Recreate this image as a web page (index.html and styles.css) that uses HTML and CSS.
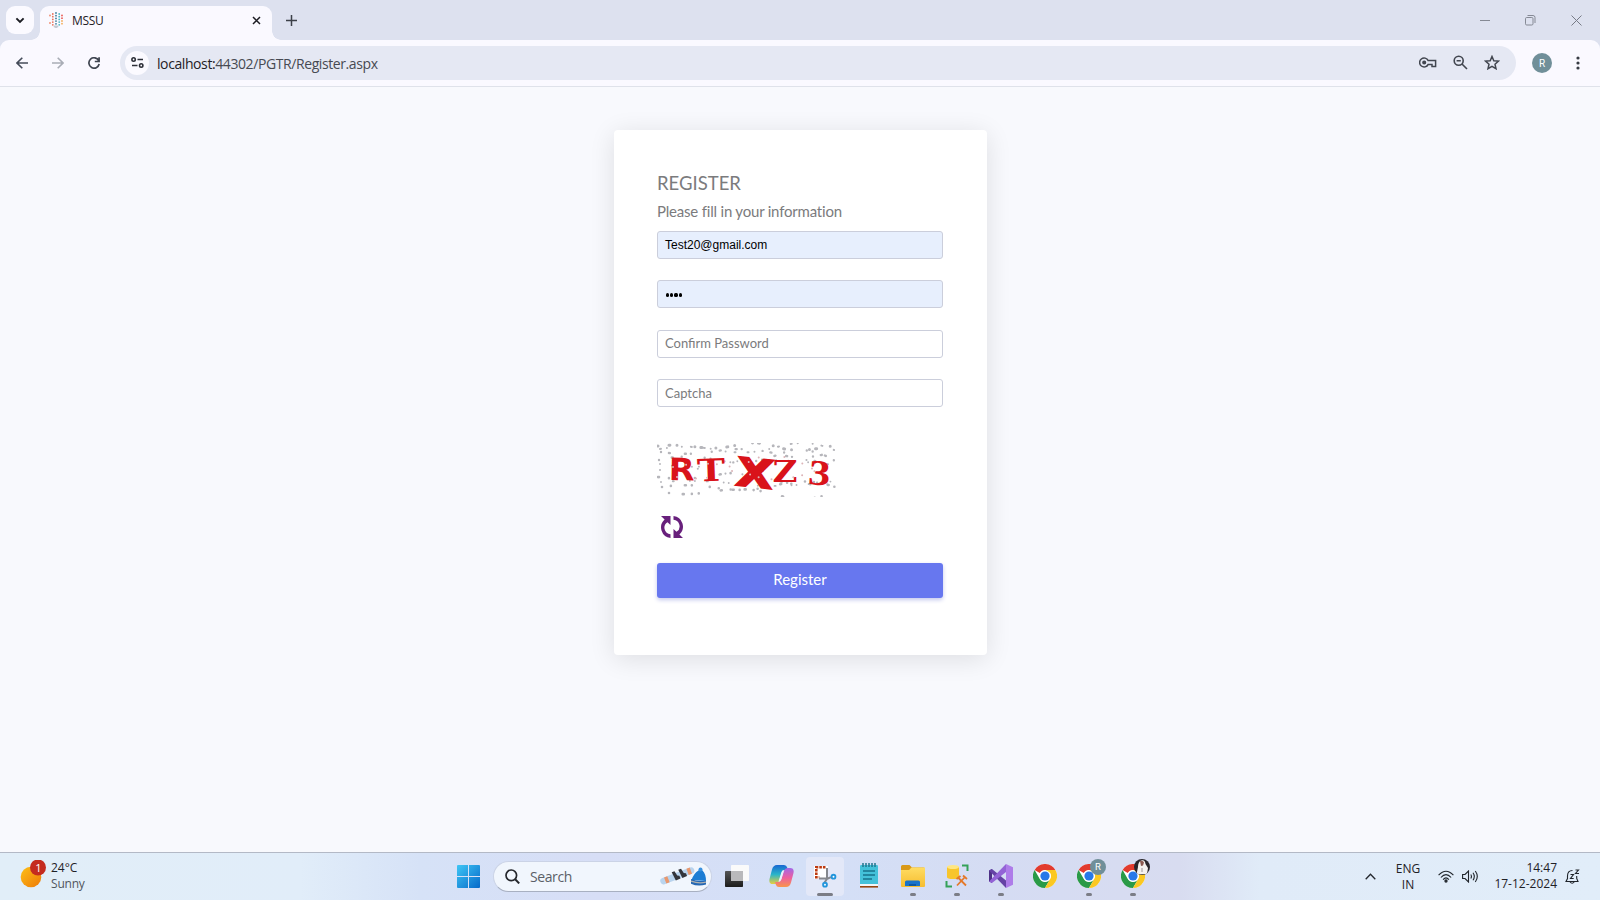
FILE: index.html
```html
<!DOCTYPE html>
<html lang="en">
<head>
<meta charset="utf-8">
<title>MSSU</title>
<link rel="stylesheet" href="styles.css">
</head>
<body>
<svg class="defs" width="0" height="0">
  <defs>
    <linearGradient id="win" x1="0" y1="0" x2="1" y2="1"><stop offset="0" stop-color="#3fc6f5"/><stop offset="1" stop-color="#0669c9"/></linearGradient>
    <linearGradient id="sun" x1="0" y1="0" x2="1" y2="1"><stop offset="0" stop-color="#fdc016"/><stop offset="1" stop-color="#ee7a08"/></linearGradient>
    <linearGradient id="cpA" x1="0" y1="0" x2="0" y2="1"><stop offset="0" stop-color="#1767d2"/><stop offset=".5" stop-color="#2ab5c9"/><stop offset="1" stop-color="#e8cf3c"/></linearGradient>
    <linearGradient id="cpB" x1="0" y1="0" x2="0" y2="1"><stop offset="0" stop-color="#a267e8"/><stop offset=".5" stop-color="#ec5fa0"/><stop offset="1" stop-color="#f9954a"/></linearGradient>
    <linearGradient id="dark" x1="0" y1="0" x2="0" y2="1"><stop offset="0" stop-color="#555"/><stop offset="1" stop-color="#1c1c1c"/></linearGradient>
    <linearGradient id="fold" x1="0" y1="0" x2="0" y2="1"><stop offset="0" stop-color="#ffdc62"/><stop offset="1" stop-color="#f6bd30"/></linearGradient>
    <symbol id="chrome" viewBox="0 0 24 24">
      <circle cx="12" cy="12" r="12" fill="#fff"/>
      <path d="M1.6 6A12 12 0 0 1 22.4 6H12A6 6 0 0 0 6.8 9Z" fill="#e23b2e"/>
      <path d="M1.6 6A12 12 0 0 0 12 24L17.2 15A6 6 0 0 1 6.8 15Z" fill="#2a9a47"/>
      <path d="M22.4 6A12 12 0 0 1 12 24L17.2 15A6 6 0 0 0 17.2 9L12 6Z" fill="#fbc821"/>
      <circle cx="12" cy="12" r="5.7" fill="#fff"/>
      <circle cx="12" cy="12" r="4.6" fill="#2879e8"/>
    </symbol>
  </defs>
</svg>

<div class="tabstrip">
  <button class="tab-search"><svg width="10" height="7" viewBox="0 0 10 7"><path d="M1.4 1.4 5 5l3.6-3.6" fill="none" stroke="#1b1c22" stroke-width="1.9"/></svg></button>
  <div class="tab">
    <svg class="favicon" width="14" height="16" viewBox="0 0 14 16" fill="none" stroke-width="1.8" stroke-linecap="round">
      <path d="M1 3.500v2M1 11v2" stroke="#f08a6c" stroke-dasharray="0 2.700"/>
      <path d="M3.800 2v12" stroke="#e8745c" stroke-dasharray="0 2.700"/>
      <path d="M7 1v11" stroke="#3f7f9a" stroke-dasharray="0 2.700"/>
      <path d="M10.200 2v12" stroke="#4bb8c4" stroke-dasharray="0 2.700"/>
      <path d="M13 3.500v3" stroke="#ea5a52" stroke-dasharray="0 2.700"/>
      <path d="M13 9v4" stroke="#f3ae5c" stroke-dasharray="0 2.700"/>
      <path d="M5.500 14.500h3M7 15.500h.1" stroke="#c3c9d2"/>
    </svg>
    <span class="tab-title">MSSU</span>
    <svg class="tab-close" width="9" height="9" viewBox="0 0 9 9"><path d="m1 1 7 7M8 1 1 8" stroke="#1b1c22" stroke-width="1.500"/></svg>
  </div>
  <svg class="new-tab" width="11" height="11" viewBox="0 0 11 11"><path d="M5.500 0v11M0 5.500h11" stroke="#3c4048" stroke-width="1.500"/></svg>
  <div class="window-buttons">
    <svg width="10" height="10" viewBox="0 0 10 10"><path d="M0 5.500h10" stroke="#858994"/></svg>
    <svg width="11" height="11" viewBox="0 0 11 11" fill="none" stroke="#858994"><rect x=".5" y="2.500" width="7.500" height="7.500" rx="1.200"/><path d="M2.500 .5H8a2 2 0 0 1 2 2V8"/></svg>
    <svg width="11" height="11" viewBox="0 0 11 11"><path d="m.5.500 10 10M10.500.500l-10 10" stroke="#777b86"/></svg>
  </div>
</div>

<div class="toolbar">
  <div class="nav">
    <svg width="12" height="12" viewBox="0 0 12 12" fill="none" stroke="#454c5a" stroke-width="1.600"><path d="M12 6H1.200M6.300.700 1 6l5.300 5.300"/></svg>
    <svg width="12" height="12" viewBox="0 0 12 12" fill="none" stroke="#a9adb6" stroke-width="1.600"><path d="M0 6h10.800M5.700.700 11 6l-5.300 5.300"/></svg>
    <svg width="12" height="12" viewBox="0 0 12 12" fill="none" stroke="#3f4550" stroke-width="1.700"><path d="M10.700 3.500A5.200 5.200 0 1 0 11.200 7M11.100.200v4.300H6.800"/></svg>
  </div>
  <div class="omnibox">
    <span class="site-info"><svg width="13" height="11" viewBox="0 0 13 11" fill="none" stroke="#2d3038" stroke-width="1.600"><circle cx="2.600" cy="2.500" r="1.700"/><path d="M6.500 2.500h5.500M1 8.500h5.500"/><circle cx="10.200" cy="8.500" r="1.700"/></svg></span>
    <span class="url"><b>localhost:</b>44302/PGTR/Register.aspx</span>
    <div class="omni-actions">
      <svg width="18" height="11" viewBox="0 0 18 11" fill="none" stroke="#42464f" stroke-width="1.500"><path d="M9.200 3.600A4.500 4.500 0 1 0 9.200 7.400H13v2h3.600V3.600Z"/><circle cx="5.200" cy="5.500" r="1.300" fill="#42464f"/></svg>
      <svg width="15" height="15" viewBox="0 0 15 15" fill="none" stroke="#42464f" stroke-width="1.600"><circle cx="5.700" cy="5.700" r="4.500"/><path d="m9 9 5 5M3.600 5.700h4.200"/></svg>
      <svg width="16" height="15" viewBox="0 0 16 15" fill="none" stroke="#42464f" stroke-width="1.500"><path d="m8 1.500 1.800 4.200 4.700.4-3.500 3.100 1 4.500L8 11.300l-4 2.400 1-4.500L1.500 6.100l4.700-.4Z"/></svg>
    </div>
  </div>
  <span class="profile">R</span>
  <svg class="kebab" width="4" height="14" viewBox="0 0 4 14" fill="#373b43"><circle cx="2" cy="2" r="1.600"/><circle cx="2" cy="7" r="1.600"/><circle cx="2" cy="12" r="1.600"/></svg>
</div>

<main class="page">
  <form class="card">
    <h1 class="title">REGISTER</h1>
    <p class="subtitle">Please fill in your information</p>
    <div class="fields">
      <div class="field filled">Test20@gmail.com</div>
      <div class="field filled"><span class="dots"><i></i><i></i><i></i><i></i></span></div>
      <div class="field">Confirm Password</div>
      <div class="field last">Captcha</div>
    </div>
    <svg class="captcha" width="180" height="54" viewBox="0 0 180 54">
      <g fill="none" stroke="#b6b6bb" stroke-linecap="round">
        <path d="M1 3Q20 1 40 4T80 2T120 4T179 2" stroke-width="3" stroke-dasharray="0 11 1 7 0 18 0 6 1 14"/>
        <path d="M3 6Q30 1 60 7T120 4T177 7" stroke-width="2" stroke-dasharray="1 6 0 15 0 9 1 12"/>
        <path d="M4 9Q30 13 60 8T120 11T176 8" stroke-width="2.400" stroke-dasharray="0 8 1 15 1 5 0 21"/>
        <path d="M2 17Q30 10 60 17T120 12T178 18" stroke-width="2.400" stroke-dasharray="0 13 1 9 0 23 0 6"/>
        <path d="M3 21Q40 27 70 20T178 22" stroke-width="1.900" stroke-dasharray="0 12 1 19 0 7"/>
        <path d="M3 27Q30 22 60 29T120 23T178 25" stroke-width="2.100" stroke-dasharray="0 17 0 8 1 12 0 28"/>
        <path d="M1 34Q30 38 60 32T120 37T178 33" stroke-width="2.600" stroke-dasharray="1 10 0 19 0 7 0 25"/>
        <path d="M4 39Q40 36 80 41T178 38" stroke-width="1.900" stroke-dasharray="0 12 1 16 0 5"/>
        <path d="M5 44Q30 40 60 45T120 42T178 44" stroke-width="2.600" stroke-dasharray="0 9 0 14 1 6 0 18"/>
        <path d="M12 50Q30 53 60 48T120 52T176 49" stroke-width="2.600" stroke-dasharray="0 14 1 8 0 7 0 22 1 9"/>
      </g>
      <g fill="#d9131a" font-weight="700">
        <text transform="translate(11.500 37) rotate(1)" font-family="DejaVu Sans" font-size="31" textLength="26" lengthAdjust="spacingAndGlyphs">R</text>
        <text transform="translate(40.500 38.500) rotate(-2)" font-family="DejaVu Serif" font-size="31" textLength="28" lengthAdjust="spacingAndGlyphs">T</text>
        <text transform="translate(78 42) rotate(6)" font-family="DejaVu Sans" font-size="39" textLength="37" lengthAdjust="spacingAndGlyphs" stroke="#d9131a" stroke-width="1.800">X</text>
        <text transform="translate(115.500 38.500)" font-family="DejaVu Serif" font-size="30" textLength="25" lengthAdjust="spacingAndGlyphs">Z</text>
        <text transform="translate(150.500 41) rotate(5)" font-family="Liberation Serif" font-size="36" textLength="22" lengthAdjust="spacingAndGlyphs">3</text>
      </g>
      <g fill="none" stroke="#dcb4b8" stroke-linecap="round">
        <path d="M16 24Q60 15 90 30T168 24" stroke-width="2" stroke-dasharray="0 13 0 22 0 9"/>
        <path d="M20 34Q60 40 90 20T168 34" stroke-width="2" stroke-dasharray="0 19 0 11 0 26"/>
      </g>
    </svg>
    <svg class="refresh" width="22" height="22" viewBox="0 0 22 22"><g fill="#68207c"><path d="M0 0h9.500v9L6.500 6.200A6.500 6.500 0 0 0 9.500 18.200V22A10.600 10.600 0 0 1 3.600 3.600Z"/><path d="M22 22h-9.500v-9l3 2.800A6.500 6.500 0 0 0 12.500 3.800V0a10.600 10.600 0 0 1 5.900 18.400Z"/></g></svg>
    <button type="button" class="submit">Register</button>
  </form>
</main>

<footer class="taskbar">
  <div class="weather">
    <svg width="26" height="28" viewBox="0 0 26 28"><circle cx="11" cy="17" r="10.300" fill="url(#sun)"/><circle cx="18" cy="7.500" r="8" fill="#c42b1f"/><text class="badge-num" x="18.500" y="11.500" text-anchor="middle">1</text></svg>
    <div class="weather-text"><span>24°C</span><span class="muted">Sunny</span></div>
  </div>
  <div class="center">
    <svg class="start" width="23" height="23" viewBox="0 0 23 23" fill="url(#win)"><path fill-rule="evenodd" d="M1 0h21a1 1 0 0 1 1 1v21a1 1 0 0 1-1 1H1a1 1 0 0 1-1-1V1a1 1 0 0 1 1-1ZM11 0v11H0v1h11v11h1V12h11v-1H12V0Z"/></svg>
    <div class="search">
      <svg width="15" height="15" viewBox="0 0 15 15" fill="none" stroke="#25272c" stroke-width="1.700"><circle cx="6.300" cy="6.300" r="5.300"/><path d="m10.200 10.200 4 4.200" stroke-width="2"/></svg>
      <span class="search-label">Search</span>
      <svg class="search-art" width="49" height="22" viewBox="0 0 49 22">
        <g transform="translate(4 10) rotate(-21)"><rect x="-4" y="3" width="36" height="6.500" rx="3.200" fill="#b9d4ee"/><path d="M1 3h3.500v6.500H1zM25 3h3.500v6.500H25z" fill="#e9986e"/><path d="M10 1h3l1 5 2 1v3h-5zM17 1h3l1 5 2 1v3h-5z" fill="#33353b"/></g>
        <path d="M33.500 15Q36 8 40.500 5.500L42 3l2.500 2.500Q48 9 48 16Z" fill="#1d7dd4"/><circle cx="42.500" cy="4.500" r="2" fill="#3a91df"/><path d="M33 14q7 3 15 1.500v4q-8 2.500-15-.8Z" fill="#2467b4"/><path d="M33 16.200q8 2.800 15 1" stroke="#b0b2b0" stroke-width="1.300" fill="none"/>
      </svg>
    </div>
    <div class="apps">
      <div class="app"><svg width="24" height="24" viewBox="0 0 24 24"><rect x="0" y="7" width="18" height="16" rx=".8" fill="url(#dark)"/><rect x="6" y="1" width="18" height="16" rx=".8" fill="#fafafa"/><path d="M6 7h12v10H6z" fill="#b9b9bb"/></svg></div>
      <div class="app"><svg width="25" height="24" viewBox="0 0 25 24"><path d="M8 1h7q2.500 0 3.200 2.500L19 6h-3q-2.500 0-3.200 2.500L10 17q-1 3-4 3H4Q-.5 20 .5 15L3 5.500Q4.200 1 8 1Z" fill="url(#cpA)"/><path d="M17 23h-7q-2.500 0-3.200-2.500L6 18h3q2.500 0 3.200-2.500L15 7q1-3 4-3h2q4.500 0 3.500 5L22 18.500Q20.800 23 17 23Z" fill="url(#cpB)"/><path d="M9.500 17.500 12.500 8q.6-2 2.500-2L12.500 15q-.8 2.500-3 2.500Z" fill="#e9effb"/></svg></div>
      <div class="app active"><svg width="24" height="24" viewBox="0 0 24 24"><rect x="1" y="2" width="14" height="13" fill="#fff"/><path d="M12.500 3.300H3.300v10h3" fill="none" stroke="#bd3a10" stroke-width="2.600" stroke-dasharray="2.600 1"/><path d="M14 4v11l-2.500 3.500M6 14.500h9l3-1.300" fill="none" stroke="#85888d" stroke-width="2"/><g fill="#fff" stroke="#2295dc" stroke-width="1.900"><circle cx="20.500" cy="12.700" r="1.900"/><circle cx="12" cy="20.700" r="1.900"/></g></svg><i class="mark"></i></div>
      <div class="app"><svg width="20" height="26" viewBox="0 0 20 26"><rect x="1" y="2" width="18" height="20" rx="1.200" fill="#44c1d9"/><path d="M1 21h18v2H1z" fill="#f2f5f7"/><path d="M1 23h18v1.600H1z" fill="#96450f"/><path d="M4 0v4M7 0v4M10 0v4M13 0v4M16 0v4" stroke="#20768d" stroke-width="1.500"/><path d="M4 8h12M4 12h12M4 16h9" stroke="#17738c" stroke-width="1.500"/></svg></div>
      <div class="app"><svg width="24" height="22" viewBox="0 0 24 22"><path d="M0 1.500Q0 0 1.500 0h7L11 2.500h11.500q1.500 0 1.500 1.500v8H0Z" fill="#d99917"/><path d="M0 5h8l2.500-2.500H24v18.500q0 1-1 1H1q-1 0-1-1Z" fill="url(#fold)"/><path d="M4 21v-4q0-1.500 1.500-1.500h12q1.500 0 1.500 1.500v4Z" fill="#1873c9"/><path d="M8 21v-2h7v2Z" fill="#0d57a2"/></svg><i class="mark"></i></div>
      <div class="app"><svg width="24" height="24" viewBox="0 0 24 24"><path d="M17 1.500h5.500V7M1.500 17v5.500H7" fill="none" stroke="#35a158" stroke-width="2"/><path d="M2 3v10q0 2 6 2t6-2V3Z" fill="#f8c52c"/><ellipse cx="8" cy="3" rx="6" ry="2" fill="#ffe681"/><path d="m12.500 13 8.500 8.500M20 13 12 21.500M11.500 15l4-3M18 11.500l4 3.500" stroke="#e4792a" stroke-width="1.800" fill="none"/></svg><i class="mark"></i></div>
      <div class="app"><svg width="24" height="24" viewBox="0 0 24 24"><path d="M0 6.500 3 5v14l-3-1.500Z" fill="#4d3186"/><path d="M0 6.500 3 5l14 11.500V24Z" fill="#6542a5"/><path d="M0 17.500 17 0v8L3 19Z" fill="#9363d6"/><path d="m17 0 7 3.200v17.600L17 24Z" fill="#ae7ce9"/></svg><i class="mark"></i></div>
      <div class="app"><svg width="24" height="24"><use href="#chrome"/></svg></div>
      <div class="app"><svg width="24" height="24"><use href="#chrome"/></svg><span class="avatar">R</span><i class="mark"></i></div>
      <div class="app"><svg width="24" height="24"><use href="#chrome"/></svg><span class="avatar dark"><svg width="16" height="16" viewBox="0 0 16 16"><path d="M2.500 15.500 4 8Q4 3 7 1.500 11 0 11.500 5L14 9 13 15Z" fill="#f5f2ef"/><path d="M6 2q3-1 4 1.500l-1 3-2 .5Z" fill="#8c5a50"/><path d="M8 9v4" stroke="#9b9597"/></svg></span><i class="mark"></i></div>
    </div>
  </div>
  <div class="tray">
    <svg class="up" width="11" height="7" viewBox="0 0 11 7"><path d="m.7 6.300 4.800-5 4.800 5" fill="none" stroke="#23272d" stroke-width="1.300"/></svg>
    <div class="lang"><span>ENG</span><span>IN</span></div>
    <svg class="wifi" width="16" height="13" viewBox="0 0 16 13" fill="none" stroke="#20252b" stroke-width="1.100"><path d="M.6 5.200Q8-2.800 15.400 5.200M2.900 7.500Q8 1.800 13.100 7.500M5.100 9.600Q8 6.200 10.900 9.600"/><circle cx="8" cy="11" r="1.100" fill="#20252b"/></svg>
    <svg class="volume" width="17" height="13" viewBox="0 0 17 13" fill="none" stroke="#20252b" stroke-width="1.100"><path d="M.6 4.500H3L6.500 1v11L3 8.500H.6Z"/><path d="M8.800 4.500q1.300 2 0 4M11 2.700q2.600 3.800 0 7.600M13.300 1q4 5.500 0 11"/></svg>
    <div class="clock"><span>14:47</span><span>17-12-2024</span></div>
    <svg class="bell" width="15" height="15" viewBox="0 0 15 15" fill="none" stroke="#20252b" stroke-width="1.100"><path d="M7.500 1.500Q2.500 1.500 2.500 7v2.500L1 12.500h12l-1.300-3V7M5 13q2.200 2.500 4.200 0M5.500 5.500h3l-3 4h3.200M10.500 1h3l-3 3.500H14"/></svg>
  </div>
</footer>
</body>
</html>
```
FILE: styles.css
```css
* { box-sizing: border-box; }

body {
  margin: 0;
  width: 1600px;
  height: 900px;
  overflow: hidden;
  display: flex;
  flex-direction: column;
  background: #dde1ef;
  font-family: "Open Sans", "Noto Sans", sans-serif;
  font-size: 12px;
  color: #1f2126;
}

svg { display: block; flex: none; }
.defs { position: absolute; }
button { border: 0; padding: 0; font: inherit; }

/* Tab strip */
.tabstrip {
  height: 40px;
  flex: none;
  display: flex;
  align-items: center;
  padding-left: 6px;
}
.tab-search {
  width: 28px;
  height: 28px;
  border-radius: 9px;
  background: #fbfaff;
  display: grid;
  place-items: center;
}
.tab {
  position: relative;
  align-self: flex-end;
  width: 232px;
  height: 34px;
  margin-left: 6px;
  padding: 0 11px 6px 9px;
  border-radius: 9px 9px 0 0;
  background: #faf9ff;
  display: flex;
  align-items: center;
}
.tab::before,
.tab::after {
  content: "";
  position: absolute;
  bottom: 0;
  width: 9px;
  height: 9px;
}
.tab::before { left: -9px; background: radial-gradient(circle at 0 0, transparent 8.5px, #faf9ff 9px); }
.tab::after { right: -9px; background: radial-gradient(circle at 100% 0, transparent 8.5px, #faf9ff 9px); }
.tab-title { margin-left: 9px; letter-spacing: -.35px; }
.tab-close { margin-left: auto; }
.new-tab { margin-left: 14px; }
.window-buttons {
  margin-left: auto;
  margin-right: 18px;
  display: flex;
  align-items: center;
  gap: 35px;
}

/* Address bar */
.toolbar {
  height: 47px;
  flex: none;
  display: flex;
  align-items: center;
  padding: 0 20px 1px 16px;
  border-bottom: 1px solid #dfe2ea;
  border-radius: 9px 9px 0 0;
  background: #faf9ff;
}
.nav { display: flex; gap: 24px; width: 104px; }
.omnibox {
  width: 1396px;
  height: 34px;
  padding: 0 16px 0 5px;
  border-radius: 17px;
  background: #e5e8f3;
  display: flex;
  align-items: center;
}
.site-info {
  width: 24px;
  height: 24px;
  border-radius: 50%;
  background: #fbfaff;
  display: grid;
  place-items: center;
}
.url { margin-left: 8px; padding-top: 1px; font-size: 14px; letter-spacing: -.41px; color: #474a52; }
.url b { font-weight: 400; color: #1f2126; }
.omni-actions { margin-left: auto; display: flex; align-items: center; gap: 16px; }
.profile {
  width: 20px;
  height: 20px;
  margin-left: 16px;
  border-radius: 50%;
  background: #708f99;
  color: #fff;
  font: 10px/21px Roboto, sans-serif;
  text-align: center;
}
.kebab { margin-left: auto; }

/* Register page */
.page {
  flex: 1;
  padding-top: 43px;
  background: #f8f9fd;
  font-family: Lato, sans-serif;
  color: #7b7b7d;
}
.card {
  width: 373px;
  height: 525px;
  margin-left: 614px;
  padding: 43px;
  border-radius: 4px;
  background: #fff;
  box-shadow: 0 4px 26px rgba(0, 0, 0, .11);
}
.title { margin: 0; font-size: 18.5px; line-height: 20px; font-weight: 400; }
.subtitle { margin: 8px 0 0; font-size: 15px; line-height: 20px; letter-spacing: -.2px; }
.fields { margin-top: 10px; display: grid; gap: 21.400px; }
.field {
  width: 286px;
  height: 28px;
  padding: 0 7px;
  border: 1px solid #cbcedb;
  border-radius: 3px;
  background: #fff;
  font-size: 13px;
  line-height: 25px;
  color: #7b7b7d;
}
.last { line-height: 27px; }
.filled {
  background: #e7effd;
  font-family: "Liberation Sans", Arial, sans-serif;
  font-size: 12px;
  line-height: 27px;
  color: #000;
}
.dots { display: flex; gap: 1px; padding: 12px 0 0 1px; }
.dots i { width: 3.200px; height: 3.200px; border-radius: 50%; background: #000; }
.captcha { margin-top: 36px; }
.refresh { margin: 19px 0 0 4px; }
.submit {
  display: block;
  width: 286px;
  height: 35px;
  margin-top: 25px;
  border-radius: 3px;
  background: #6777ef;
  box-shadow: 0 2px 4px #c5c9ee;
  color: #fff;
  font-size: 15px;
  line-height: 31px;
  padding-bottom: 3px;
}

/* Taskbar */
.taskbar {
  height: 48px;
  flex: none;
  display: flex;
  align-items: center;
  border-top: 1px solid #b3b9c6;
  background: linear-gradient(90deg, #e1eef8 0, #e1edf9 300px, #d6e2f7 420px, #d7def6 600px, #d4e0f7 800px, #d5dcf3 1000px, #d8dcf0 1180px, #e0ebf8 1260px, #e1edf9 100%);
}
.weather { display: flex; width: 457px; padding: 0 0 2px 20px; gap: 5px; }
.badge-num { font: 11px "Open Sans", sans-serif; fill: #fff; }
.weather-text, .lang, .clock { display: flex; flex-direction: column; line-height: 16px; }
.clock { padding-bottom: 1px; }
.muted { color: #50555d; letter-spacing: -.2px; }
.center { display: flex; align-items: center; width: 698px; }
.search {
  width: 219px;
  height: 31px;
  margin: 0 0 1px 13px;
  padding: 0 4px 0 11px;
  border: 1px solid #cbd3e6;
  border-bottom-color: #a8b0c1;
  border-radius: 16px;
  background: #f1f6fd;
  display: flex;
  align-items: center;
}
.search-label { margin-left: 10px; font-size: 14px; letter-spacing: -.4px; color: #5b5f67; }
.search-art { margin-left: auto; }
.apps { display: flex; margin-left: 3px; }
.app {
  position: relative;
  width: 38px;
  height: 39px;
  margin: 0 3px;
  border-radius: 4px;
  display: grid;
  place-items: center;
}
.app > svg { margin-bottom: 1px; }
.active { background: #e3e8f8; }
.mark {
  position: absolute;
  bottom: 0;
  left: 16px;
  width: 6px;
  height: 3px;
  border-radius: 2px;
  background: #7b7d86;
}
.active .mark { left: 11px; width: 16px; }
.avatar {
  position: absolute;
  left: 20px;
  top: 2px;
  width: 16px;
  height: 16px;
  border-radius: 50%;
  overflow: hidden;
  background: #708f99;
  color: #fff;
  font: 9.500px/16px Roboto, sans-serif;
  text-align: center;
}
.dark { background: #29262b; }
.tray { display: flex; align-items: center; flex: 1; padding-left: 210px; }
.tray > svg { margin-bottom: 1px; }
.lang { width: 36px; margin-left: 14px; text-align: center; }
.wifi { margin-left: 12px; }
.volume { margin-left: 8px; }
.clock { width: 70px; margin-left: 8px; text-align: right; white-space: nowrap; }
.bell { margin-left: 8px; }
```
